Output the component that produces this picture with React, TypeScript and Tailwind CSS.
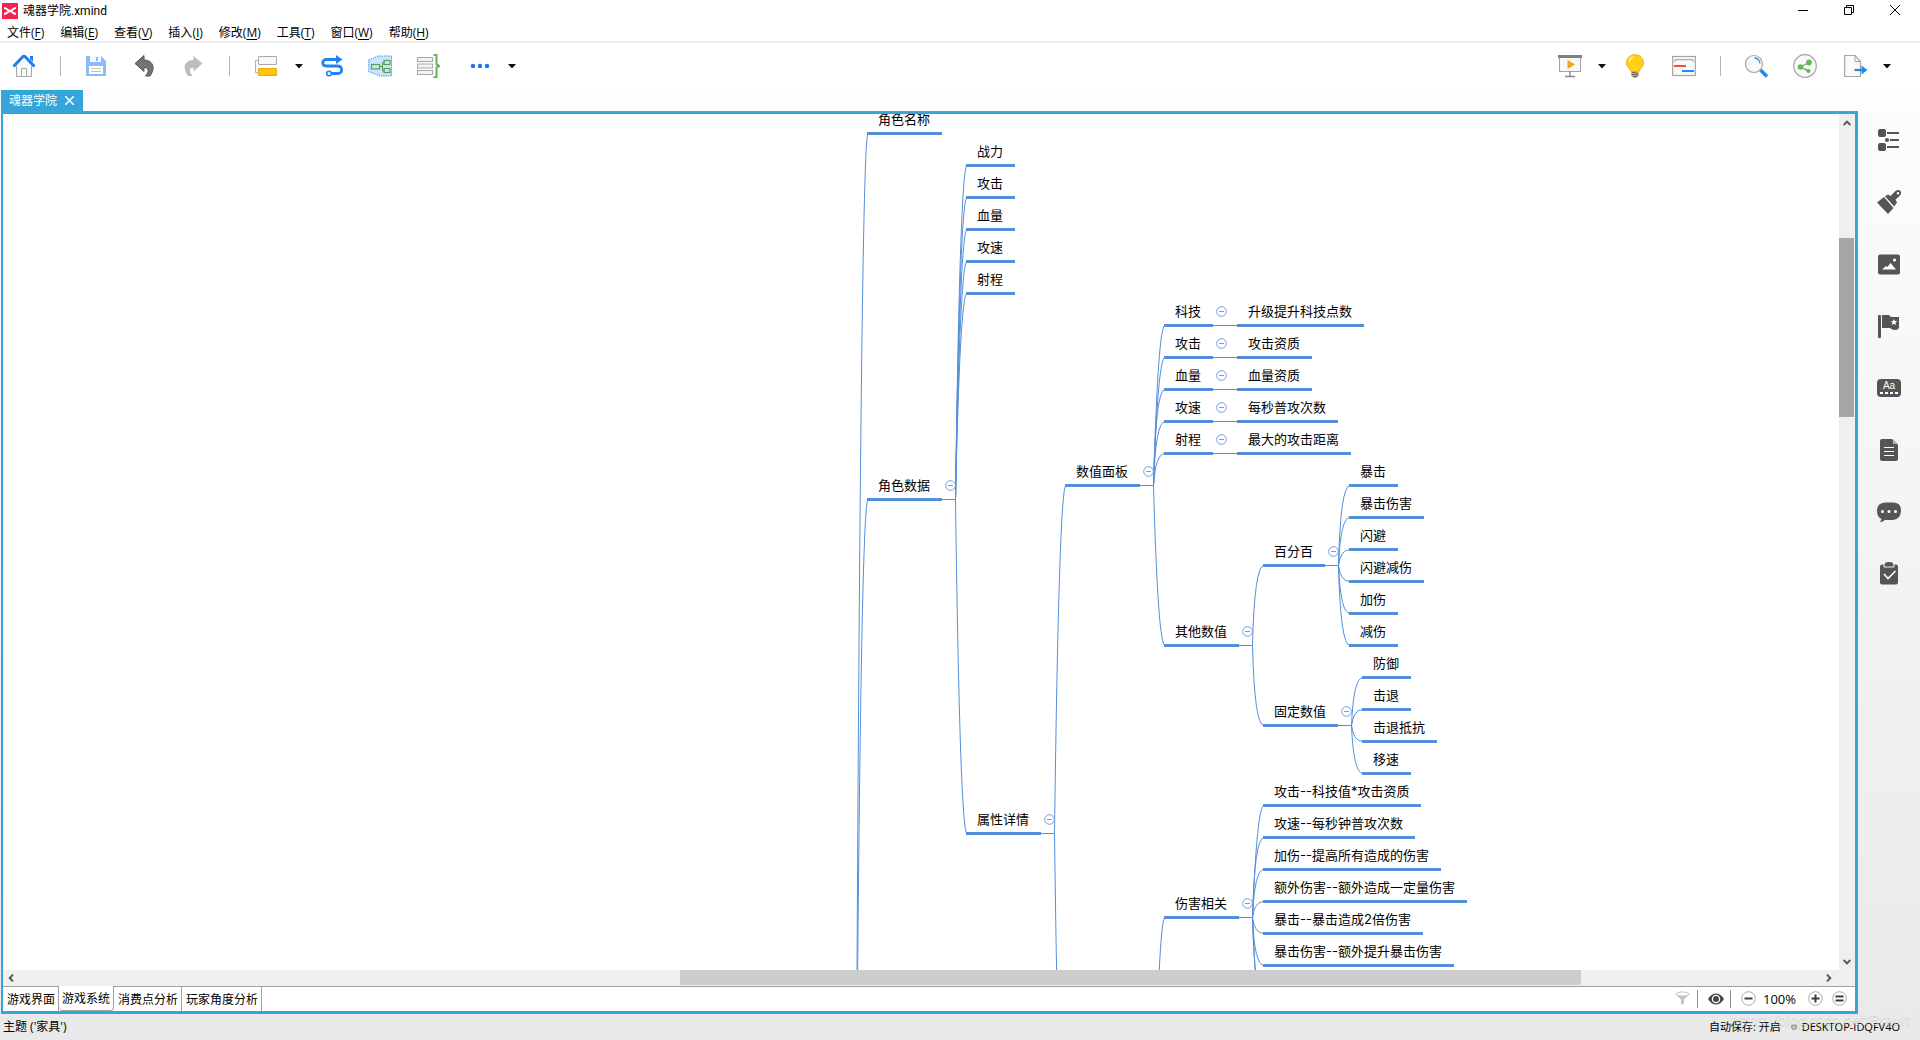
import React from "react";

const UI = "font-['Open_Sans','Noto_Sans_CJK_SC',sans-serif]";
const LINE = "#548fda";

type Topic = { x: number; y: number; text: string; toggle?: boolean };

const topics: Topic[] = [
  { x: 864, y: 18, text: "角色名称" },
  { x: 963, y: 50, text: "战力" },
  { x: 963, y: 82, text: "攻击" },
  { x: 963, y: 114, text: "血量" },
  { x: 963, y: 146, text: "攻速" },
  { x: 963, y: 178, text: "射程" },
  { x: 864, y: 384, text: "角色数据", toggle: true },
  { x: 963, y: 718, text: "属性详情", toggle: true },
  { x: 1062, y: 370, text: "数值面板", toggle: true },
  { x: 1161, y: 210, text: "科技", toggle: true },
  { x: 1161, y: 242, text: "攻击", toggle: true },
  { x: 1161, y: 274, text: "血量", toggle: true },
  { x: 1161, y: 306, text: "攻速", toggle: true },
  { x: 1161, y: 338, text: "射程", toggle: true },
  { x: 1234, y: 210, text: "升级提升科技点数" },
  { x: 1234, y: 242, text: "攻击资质" },
  { x: 1234, y: 274, text: "血量资质" },
  { x: 1234, y: 306, text: "每秒普攻次数" },
  { x: 1234, y: 338, text: "最大的攻击距离" },
  { x: 1161, y: 530, text: "其他数值", toggle: true },
  { x: 1260, y: 450, text: "百分百", toggle: true },
  { x: 1346, y: 370, text: "暴击" },
  { x: 1346, y: 402, text: "暴击伤害" },
  { x: 1346, y: 434, text: "闪避" },
  { x: 1346, y: 466, text: "闪避减伤" },
  { x: 1346, y: 498, text: "加伤" },
  { x: 1346, y: 530, text: "减伤" },
  { x: 1260, y: 610, text: "固定数值", toggle: true },
  { x: 1359, y: 562, text: "防御" },
  { x: 1359, y: 594, text: "击退" },
  { x: 1359, y: 626, text: "击退抵抗" },
  { x: 1359, y: 658, text: "移速" },
  { x: 1161, y: 802, text: "伤害相关", toggle: true },
  { x: 1260, y: 690, text: "攻击--科技值*攻击资质" },
  { x: 1260, y: 722, text: "攻速--每秒钟普攻次数" },
  { x: 1260, y: 754, text: "加伤--提高所有造成的伤害" },
  { x: 1260, y: 786, text: "额外伤害--额外造成一定量伤害" },
  { x: 1260, y: 818, text: "暴击--暴击造成2倍伤害" },
  { x: 1260, y: 850, text: "暴击伤害--额外提升暴击伤害" },
];

type Branch = { from: number; x: number; y: number; to: number; ends: number[] };

const branches: Branch[] = [
  { from: 853, x: 853, y: 1076, to: 864, ends: [18, 384] },
  { from: 938, x: 952.5, y: 384, to: 963, ends: [50, 82, 114, 146, 178, 718] },
  { from: 1037, x: 1051.5, y: 718, to: 1062, ends: [370, 1069] },
  { from: 1136, x: 1150.5, y: 370, to: 1161, ends: [210, 242, 274, 306, 338, 530] },
  { from: 1150.5, x: 1150.5, y: 1066, to: 1161, ends: [802] },
  { from: 1235, x: 1249.5, y: 530, to: 1260, ends: [450, 610] },
  { from: 1321, x: 1335.5, y: 450, to: 1346, ends: [370, 402, 434, 466, 498, 530] },
  { from: 1334, x: 1348.5, y: 610, to: 1359, ends: [562, 594, 626, 658] },
  { from: 1235, x: 1249.5, y: 802, to: 1260, ends: [690, 722, 754, 786, 818, 850, 882, 914] },
];

function Links() {
  return (
    <svg className="absolute left-0 top-0 h-full w-full" fill="none" stroke={LINE} strokeWidth="1">
      {branches.map((b, i) => (
        <g key={i}>
          {b.from < b.x && <path d={`M${b.from} ${b.y + 1.5}H${b.x}`} />}
          {b.ends.map((e) => (
            <path key={e} d={`M${b.x} ${b.y + 1.5}Q${b.x + 2 + (Math.abs(e - b.y) > 100 ? 2.5 : 0)} ${e + 1.5} ${b.to + 1} ${e + 1.5}`} />
          ))}
        </g>
      ))}
      {[210, 242, 274, 306, 338].map((y) => (
        <path key={y} d={`M1209 ${y + 1.5}H1236`} />
      ))}
    </svg>
  );
}

function TopicNode({ x, y, text, toggle }: Topic) {
  return (
    <div
      className="absolute h-6 whitespace-nowrap border-b-[3px] border-[#548fda] pl-[11px] pr-3 font-['Inter','Noto_Sans_CJK_SC',sans-serif] text-[13px] leading-4 text-black"
      style={{ left: x, top: y - 21 }}
    >
      {text}
      {toggle && (
        <button aria-label={`折叠 ${text}`} className="absolute left-full top-[3px] ml-[3px] h-[11px] w-[11px]">
          <svg viewBox="0 0 11 11" className="block h-full w-full" fill="#fff" stroke="#6f9fdc">
            <circle cx="5.5" cy="5.5" r="4.8" />
            <path d="M3 5.5h5" />
          </svg>
        </button>
      )}
    </div>
  );
}

function IconButton({ label, className = "", children }: { label: string; className?: string; children: React.ReactNode }) {
  return (
    <button aria-label={label} className={`h-6 w-6 shrink-0 ${className}`}>
      <svg viewBox="0 0 24 24" className="block h-6 w-6" fill="none">
        {children}
      </svg>
    </button>
  );
}

function Caret({ label, className }: { label: string; className: string }) {
  return (
    <button aria-label={label} className={`flex h-6 w-3 shrink-0 items-center justify-center ${className}`}>
      <svg viewBox="0 0 8 4" className="h-1 w-2">
        <path d="M0 0H8L4.5 4H3.5z" fill="#111" />
      </svg>
    </button>
  );
}

const Separator = () => <span className="h-5 w-px shrink-0 bg-[#b4b4b4]" />;

const menus: [string, string][] = [
  ["文件", "F"],
  ["编辑", "E"],
  ["查看", "V"],
  ["插入", "I"],
  ["修改", "M"],
  ["工具", "T"],
  ["窗口", "W"],
  ["帮助", "H"],
];

function Toolbar() {
  return (
    <div className="flex h-[46px] shrink-0 items-center justify-between bg-white pl-3 pr-[27px]">
      <div className="flex items-center gap-6">
        <IconButton label="主页">
          <path d="M4.5 11.5V22.5H19.5V11.5L12 4.5z" fill="#fafafa" />
          <path d="M4.5 12V22.5H19.5V12M9.5 22V14.5H14.5V22" stroke="#a8a8a8" />
          <path d="M1.5 12.5L10.8 2.8Q12 1.6 13.2 2.8L22.5 12.5" stroke="#1a80f0" strokeWidth="3" />
          <path d="M18 2h3v6l-3-3z" fill="#1a80f0" />
        </IconButton>
        <Separator />
        <IconButton label="保存">
          <path d="M1 2H16L21 7V22H1z" fill="#88bdf7" />
          <path d="M5 2h11v6H5z" fill="#f4f9ff" />
          <path d="M11 3h2v4h-2z" fill="#88bdf7" />
          <path d="M4 12h14v8H4z" fill="#fff" />
          <path d="M6 14.5h10M6 17.5h10" stroke="#c2c2c2" />
        </IconButton>
        <IconButton label="撤销">
          <path d="M2 9.5L11 1.5V6C18 6 24 12 17 22H12.5C16.500 17.500 16 13.500 11 13.500V17.5z" fill="#747474" stroke="#505050" />
        </IconButton>
        <IconButton label="重做">
          <path d="M21.500 9.5L12.500 2V6C5 6 0 12 7 22H11.500C8 17.500 8 13.500 12.500 13.500V17.500z" fill="#bdbdbd" />
        </IconButton>
        <Separator />
        <IconButton label="主题">
          <path d="M4.500 6.500H1.500V18.500H4.500" stroke="#b0b0b0" />
          <rect x="4.500" y="2.500" width="18" height="8" rx=".5" fill="#f8f8f8" stroke="#a8a8a8" />
          <rect x="4.500" y="14.500" width="18" height="7" rx=".5" fill="#fdc60b" stroke="#e9a90c" />
        </IconButton>
        <Caret label="更多主题" className="-mx-[9px]" />
        <IconButton label="联系">
          <path d="M18 5.500H6.500C1.500 5.500 1.500 12 6.500 12H17C23 12 23 19.500 18 19.500H11" stroke="#2484ee" strokeWidth="2.800" />
          <path d="M16 1L22.500 5.500L16 10z" fill="#2484ee" />
          <circle cx="9" cy="19.500" r="2.300" stroke="#2484ee" strokeWidth="1.600" fill="#fff" />
        </IconButton>
        <IconButton label="外框">
          <path d="M.7 6L10 2H23.500V22H12L.7 17.500z" fill="#cbe4fb" stroke="#3b8eea" strokeDasharray="1.300 1" />
          <path d="M11 12.500H14.500M17 8.500H14.500V17H17" stroke="#58a055" />
          <rect x="3.500" y="10.500" width="8" height="4.500" stroke="#58a055" strokeWidth="1.200" />
          <rect x="16" y="6.500" width="6" height="4" stroke="#58a055" strokeWidth="1.200" />
          <rect x="16" y="14.500" width="6" height="4" stroke="#58a055" strokeWidth="1.200" />
        </IconButton>
        <IconButton label="概要">
          <rect x="1.500" y="3.500" width="15" height="4" fill="#f4f4f4" stroke="#a8a8a8" />
          <rect x="1.500" y="10" width="15" height="4" fill="#f4f4f4" stroke="#a8a8a8" />
          <rect x="1.500" y="16.500" width="15" height="4" fill="#f4f4f4" stroke="#a8a8a8" />
          <path d="M17.500 1h3v9.500L23.500 12L20.500 13.500v9.500H17.500" stroke="#67b25a" strokeWidth="2" />
        </IconButton>
        <IconButton label="更多" className="ml-1">
          <g fill="#1a78ee">
            <circle cx="5" cy="12" r="2.200" />
            <circle cx="12" cy="12" r="2.200" />
            <circle cx="19" cy="12" r="2.200" />
          </g>
        </IconButton>
        <Caret label="更多工具" className="-ml-[10px]" />
      </div>
      <div className="flex items-center gap-6">
        <IconButton label="演示">
          <rect x="1.500" y="3" width="21" height="14.500" fill="#f8f8f8" stroke="#a2a2a2" />
          <path d="M0 1h24v3H0z" fill="#808080" />
          <path d="M12 17.500v5M7 22.500h10" stroke="#8a8a8a" strokeWidth="1.400" />
          <path d="M9.500 6L17 10.500L9.500 15z" fill="#f6a21d" />
        </IconButton>
        <Caret label="演示选项" className="-ml-[10px] -mr-2" />
        <IconButton label="头脑风暴">
          <path d="M11 .7C5.500 .7 2.500 4.500 2.500 9C2.500 13 6 14.500 7 17.500H15C16 14.500 19.500 13 19.500 9C19.500 4.500 16.500 .7 11 .7z" fill="#ffcf1c" stroke="#eeae17" />
          <path d="M5.500 8C5.500 5 7.500 3.500 10 3.300" stroke="#ffefa0" strokeWidth="1.500" />
          <path d="M7.500 18h7v3.500L12.500 23.500h-3L7.500 21.500z" fill="#666" />
          <path d="M7.500 19.800L14.500 18.500M7.500 22L14.500 20.700" stroke="#eab23c" />
        </IconButton>
        <IconButton label="甘特图">
          <rect x=".7" y="2.500" width="22.600" height="19" fill="#fafafa" stroke="#a5a5a5" strokeWidth="1.200" />
          <path d="M3 8V5.700H21V8" stroke="#999" />
          <path d="M2 12h12" stroke="#f0504a" strokeWidth="2" />
          <path d="M10 17h12" stroke="#2587f0" strokeWidth="2" />
        </IconButton>
        <Separator />
        <IconButton label="搜索">
          <path d="M15.500 16L22 22.500" stroke="#2587f0" strokeWidth="3.600" />
          <circle cx="9" cy="10" r="8.500" fill="#fafafa" stroke="#a8a8a8" strokeWidth="1.200" />
          <path d="M9.500 4C13 4 15 7 15 9.500" stroke="#2587f0" strokeWidth="1.300" />
        </IconButton>
        <IconButton label="分享" className="mr-[3px]">
          <circle cx="12" cy="12" r="11.300" fill="#fafafa" stroke="#a5a5a5" strokeWidth="1.200" />
          <path d="M16 8.500L7.500 13L15.500 17" stroke="#61bb55" strokeWidth="1.400" />
          <g fill="#61bb55">
            <circle cx="16" cy="8.500" r="2.900" />
            <circle cx="7.500" cy="13" r="2.700" />
            <circle cx="15.500" cy="17" r="2.100" />
          </g>
        </IconButton>
        <IconButton label="导出">
          <path d="M.7 1.500H11L16.500 7.500V22.500H.7z" fill="#fafafa" stroke="#a5a5a5" strokeWidth="1.200" />
          <path d="M11 1.500V7.500H16.500" stroke="#a5a5a5" />
          <path d="M10.500 16H18" stroke="#2587f0" strokeWidth="2.200" />
          <path d="M17.500 11.500L23.500 16L17.500 20.500z" fill="#2587f0" />
        </IconButton>
        <Caret label="导出选项" className="-ml-[11px]" />
      </div>
    </div>
  );
}

function SideRail() {
  return (
    <aside className="flex w-[62px] shrink-0 flex-col items-center gap-[38px] pt-[39px] text-[#555]">
      <IconButton label="大纲">
        <rect x="1" y="1" width="8" height="8" rx="2" fill="#555" />
        <rect x="1" y="15" width="8" height="8" rx="2" fill="#555" />
        <circle cx="10" cy="12" r="2.100" fill="#555" />
        <path d="M10 5h12M13 12h9M10 19h12" stroke="#555" strokeWidth="2" />
      </IconButton>
      <IconButton label="格式">
        <path d="M0 12.500L7 7L16.500 18L11 24z" fill="#555" />
        <path d="M8 6.300L11 4.500L13.500 6L18.500 1Q22 -1 23.800 1.500Q25 4 22 6.500L18.500 9.500L20 12.500L17.200 16.500z" fill="#555" />
        <circle cx="21" cy="3.200" r="1.200" fill="#fff" />
      </IconButton>
      <IconButton label="图片">
        <rect x="1" y="2.500" width="22" height="20" rx="2" fill="#555" />
        <path d="M5 17.500L9 14L10.500 15L13.500 11L19 17.500z" fill="#fff" />
        <circle cx="17.500" cy="8" r="1.600" fill="#fff" />
      </IconButton>
      <IconButton label="标记">
        <rect x="1" y="1" width="3" height="23" rx="1" fill="#555" />
        <path d="M5 1H12Q13 3 15 3H22V14Q21 16 18 16Q15 16 13 14H5z" fill="#555" />
        <path d="M17 5l1 2h2.200l-1.700 1.600.6 2.300L17 9.700l-2.100 1.200.6-2.300L13.800 7H16z" fill="#fff" />
      </IconButton>
      <button aria-label="标签" className="flex h-6 w-6 shrink-0 flex-col items-center justify-center">
        <span className="flex h-[18px] w-6 flex-col items-center justify-between rounded-sm bg-[#555] pb-[3px]">
          <span className="font-['Liberation_Sans',sans-serif] text-[10px] leading-[13px] text-white">Aa</span>
          <svg viewBox="0 0 18 2" className="h-[2px] w-[18px]" stroke="#fff" strokeWidth="2">
            <path d="M0 1h18" strokeDasharray="3 2" />
          </svg>
        </span>
      </button>
      <IconButton label="备注">
        <path d="M5 1H15L21 7V21Q21 23 19 23H5Q3 23 3 21V3Q3 1 5 1z" fill="#555" />
        <path d="M16 1L21 6H16z" fill="#b5b5b5" />
        <path d="M7 9.500h10M7 13.500h10M7 17.500h10" stroke="#fff" />
      </IconButton>
      <IconButton label="批注">
        <path d="M8 2.500H17Q24 3 24 10.500Q24 19 16 20H8Q6 22 3 22L4.500 19Q0 17 0 11Q0 3 8 2.500z" fill="#555" />
        <g fill="#fff">
          <circle cx="5.500" cy="11.500" r="1.500" />
          <circle cx="12" cy="11.500" r="1.500" />
          <circle cx="18.500" cy="11.500" r="1.500" />
        </g>
      </IconButton>
      <IconButton label="任务">
        <rect x="3" y="2.500" width="18" height="20" rx="2" fill="#555" />
        <path d="M8 1Q9 0 12 0Q15 0 16 1V4H8z" fill="#555" />
        <path d="M7 2V5H17V2" stroke="#f4f4f4" />
        <path d="M7 12L11 16.500L18.500 9" stroke="#fff" strokeWidth="1.600" />
      </IconButton>
    </aside>
  );
}

function Arrow({ label, d, className }: { label: string; d: string; className: string }) {
  return (
    <button aria-label={label} className={`flex shrink-0 items-center justify-center ${className}`}>
      <svg viewBox="0 0 8 8" className="h-2 w-2" fill="none" stroke="#555" strokeWidth="1.900">
        <path d={d} />
      </svg>
    </button>
  );
}

function ZoomButton({ label, d }: { label: string; d: string }) {
  return (
    <button aria-label={label} className="h-[15px] w-[15px] shrink-0">
      <svg viewBox="0 0 15 15" className="block h-full w-full" fill="none">
        <circle cx="7.500" cy="7.500" r="6.800" fill="#fff" stroke="#aaa" />
        <path d={d} stroke="#3c3c3c" strokeWidth="2" />
      </svg>
    </button>
  );
}

const sheets = ["游戏界面", "游戏系统", "消费点分析", "玩家角度分析"];

export default function App() {
  return (
    <div className={`flex h-screen flex-col overflow-hidden bg-white text-xs text-black ${UI}`}>
      <header className="h-[43px] shrink-0 border-b-2 border-[#efefef]">
        <div className="flex h-6 items-start justify-between pt-[3px]">
          <div className="flex items-start gap-[5px] pl-[2px]">
            <svg viewBox="0 0 16 16" className="h-4 w-4" fill="none">
              <path d="M0 0h16v16H0z" fill="#f8204f" />
              <path d="M2 5C5 5 6 8 8 8S11 5 14 5M2 11C5 11 6 8 8 8S11 11 14 11" stroke="#fff" strokeWidth="2.200" />
            </svg>
            <h1 className="font-['Roboto','Noto_Sans_CJK_SC',sans-serif] leading-[17px]">魂器学院.xmind</h1>
          </div>
          <div className="flex gap-[34px] pr-[19px] pt-px">
            <button aria-label="最小化" className="h-3 w-3">
              <svg viewBox="0 0 12 12" stroke="#000"><path d="M1 6.500h10" /></svg>
            </button>
            <button aria-label="还原" className="h-3 w-3">
              <svg viewBox="0 0 12 12" stroke="#000" fill="none">
                <path d="M1.500 3.500h7v7h-7zM3.500 3V1.500h7v7H9" />
              </svg>
            </button>
            <button aria-label="关闭" className="h-3 w-3">
              <svg viewBox="0 0 12 12" stroke="#000"><path d="M1 1L11 11M11 1L1 11" /></svg>
            </button>
          </div>
        </div>
        <nav className="flex gap-4 pl-[7px]">
          {menus.map(([name, key]) => (
            <button key={key} className="whitespace-nowrap leading-[17px]">
              {name}(<span className="underline underline-offset-2">{key}</span>)
            </button>
          ))}
        </nav>
      </header>

      <Toolbar />

      <div className="flex min-h-0 flex-1 flex-col bg-linear-to-b from-[#fdfdfd] to-[#e9e9e9]">
        <div className="flex min-h-0 flex-1">
          <main className="flex min-w-0 flex-1 flex-col pl-px">
            <div className="flex h-[22px] shrink-0 items-end">
              <div className="flex h-[21px] items-center gap-2 bg-[#35a6da] pl-2 pr-[9px] text-white">
                <span>魂器学院</span>
                <button aria-label="关闭标签页" className="h-[9px] w-[9px]">
                  <svg viewBox="0 0 9 9" stroke="#fff" strokeWidth="1.500"><path d="M0 0L9 9M9 0L0 9" /></svg>
                </button>
              </div>
            </div>
            <div className="flex min-h-0 flex-1 flex-col border-[3px] border-l-2 border-[#35a6da] bg-[#efefef]">
              <div className="flex min-h-0 flex-1">
                <div className="relative min-w-0 flex-1 overflow-hidden bg-white">
                  <Links />
                  {topics.map((t) => (
                    <TopicNode key={`${t.x}-${t.y}`} {...t} />
                  ))}
                </div>
                <div className="flex w-4 shrink-0 flex-col pr-px">
                  <Arrow label="向上滚动" d="M.7 6L4 2.700L7.300 6" className="h-[17px]" />
                  <div className="grow-[107]" />
                  <div className="grow-[179] bg-[#a6a6a6]" />
                  <div className="grow-[536]" />
                  <Arrow label="向下滚动" d="M.7 2L4 5.300L7.300 2" className="h-[17px]" />
                </div>
              </div>
              <div className="flex h-4 shrink-0 pb-px pr-[18px]">
                <Arrow label="向左滚动" d="M6 .7L2.700 4L6 7.300" className="w-4" />
                <div className="grow-[661]" />
                <div className="grow-[901] bg-[#cdcdcd]" />
                <div className="grow-[240]" />
                <Arrow label="向右滚动" d="M2 .7L5.300 4L2 7.300" className="w-4" />
              </div>
              <div className="flex h-[25px] shrink-0 items-stretch justify-between bg-white">
                <div className="flex flex-1">
                  {sheets.map((s) => (
                    <button
                      key={s}
                      className={
                        s === "游戏系统"
                          ? "whitespace-nowrap rounded-b-sm border-b border-r border-[#a0a0a0] px-[3px] leading-[21px]"
                          : "whitespace-nowrap border-r border-t border-[#a0a0a0] pl-1 pr-[3px] leading-[21px]"
                      }
                    >
                      {s}
                    </button>
                  ))}
                  <div className="flex-1 border-t border-[#a0a0a0]" />
                </div>
                <div className="flex items-center border-t border-[#a0a0a0] pb-px pr-2">
                  <button aria-label="筛选" className="mr-[7px] h-[15px] w-[15px]">
                    <svg viewBox="0 0 15 15" className="block" fill="none">
                      <path d="M1 3.500L6 8.500V14L9 12.500V8.500L14 3.500z" fill="#c4c4c4" />
                      <ellipse cx="7.500" cy="3" rx="6.500" ry="2" fill="#fff" stroke="#c4c4c4" />
                    </svg>
                  </button>
                  <span className="h-[18px] w-px bg-[#8c8c8c]" />
                  <button aria-label="显示" className="ml-[10px] mr-1.5 h-4 w-4">
                    <svg viewBox="0 0 16 16" className="block" fill="none">
                      <path d="M0 8Q3.500 2.500 8 2.500T16 8Q12.500 13.500 8 13.500T0 8z" fill="#444" />
                      <circle cx="8" cy="8" r="3.600" stroke="#fff" strokeWidth="1.300" />
                    </svg>
                  </button>
                  <span className="mr-[10px] h-[18px] w-px bg-[#8c8c8c]" />
                  <ZoomButton label="缩小" d="M3.500 7.500h8" />
                  <span className="w-[52px] pl-[7px] text-[13px] leading-5">100%</span>
                  <ZoomButton label="放大" d="M3.500 7.500h8M7.500 3.500v8" />
                  <span className="w-[9px]" />
                  <ZoomButton label="适合大小" d="M3.500 5.500h8M3.500 9.500h8" />
                </div>
              </div>
            </div>
          </main>
          <SideRail />
        </div>

        <footer className="relative flex h-[26px] shrink-0 items-center justify-between bg-[#e9e9e9] pl-[3px] pr-5">
          <span>主题 ('家具')</span>
          <div className="flex items-center text-[11px]">
            <span>自动保存: 开启</span>
            <span className="ml-[10px] mr-[5px] h-[6px] w-[6px] rounded-full border border-[#8c8c8c] bg-[#c4c4c4]" />
            <span>DESKTOP-IDQFV4O</span>
          </div>
          <span className="absolute -top-1 right-[10px] font-['Open_Sans',sans-serif] text-sm leading-5 text-white/50 [text-shadow:0_1px_1px_rgba(0,0,0,0.15)]">
            https://blog.csdn.net/Brault
          </span>
        </footer>
      </div>
    </div>
  );
}
